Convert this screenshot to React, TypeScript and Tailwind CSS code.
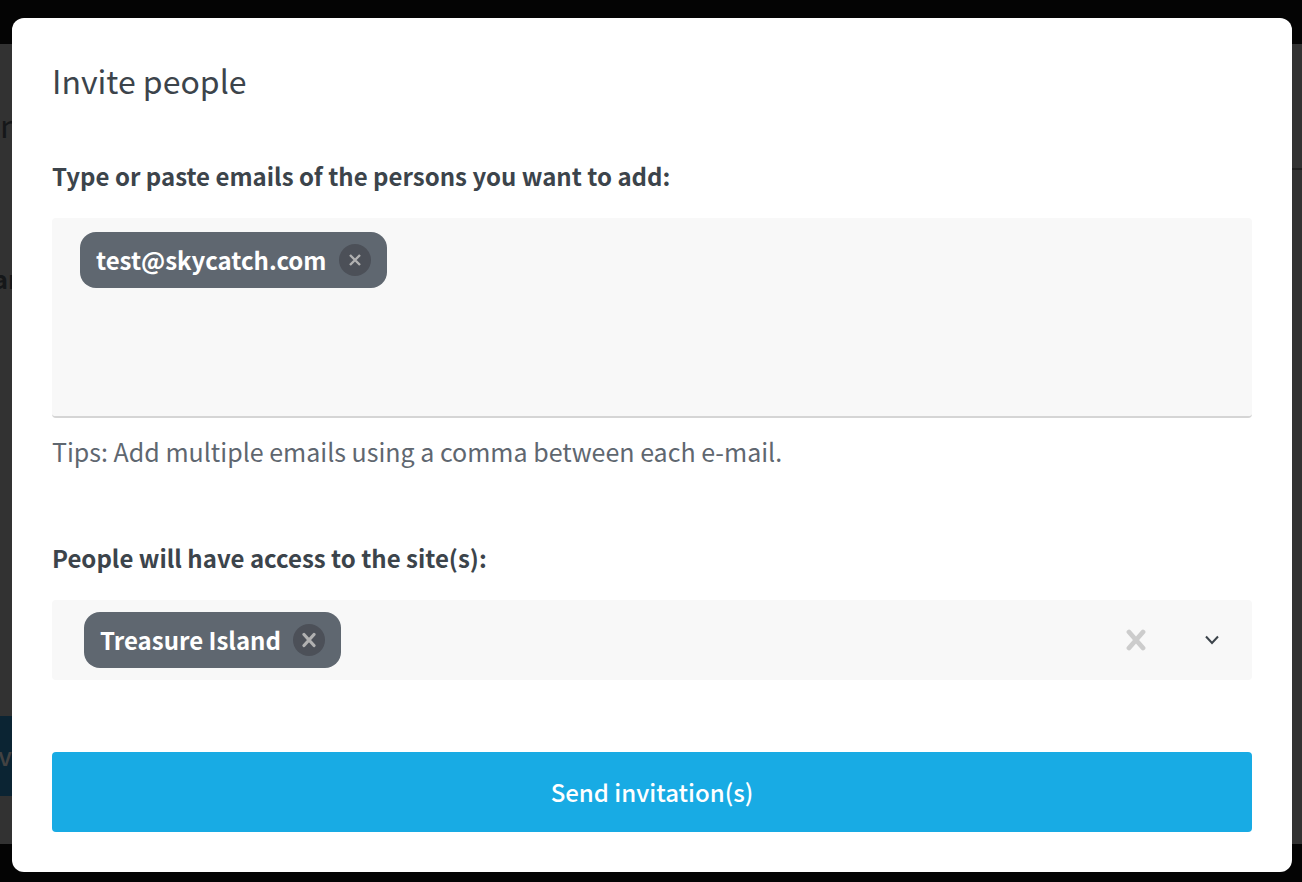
import { useState } from "react";
import type { ReactNode } from "react";

const SITES = ["Treasure Island"];

interface ChipProps {
  label: string;
  onRemove: () => void;
  icon: ReactNode;
}

function Chip({ label, onRemove, icon }: ChipProps) {
  return (
    <span className="flex h-14 items-center gap-3 rounded-2xl bg-[#5f6770] px-4 text-2xl font-bold text-white">
      {label}
      <button
        type="button"
        aria-label={`Remove ${label}`}
        onClick={onRemove}
        className="flex size-8 items-center justify-center rounded-full bg-[#4c5058] text-[#b1b1b1]"
      >
        {icon}
      </button>
    </span>
  );
}

// Page that stays visible around the dialog, already dimmed
function DimmedPage() {
  return (
    <div aria-hidden="true" className="flex min-h-screen flex-col bg-[#040404]">
      <div className="h-11" />
      <div className="flex flex-1 flex-col overflow-hidden bg-[#323232] text-[#151719]">
        <div className="flex h-[124px] items-center pt-9 text-[32px] leading-10">n</div>
        <div className="ml-6 h-[2px] bg-[#202020]" />
        <div className="flex w-3 flex-1 justify-center pt-[88px] text-[25px] leading-10 font-bold">ar</div>
        <div className="flex h-20 w-3 items-center justify-end bg-[#0b2433] text-[25px] font-medium text-[#434242]">
          v
        </div>
        <div className="h-12" />
      </div>
      <div className="h-[38px]" />
    </div>
  );
}

export default function App() {
  const [emails, setEmails] = useState(["test@skycatch.com"]);
  const [draft, setDraft] = useState("");
  const [sites, setSites] = useState(SITES);

  const handleDraft = (value: string) => {
    if (!value.includes(",")) {
      setDraft(value);
      return;
    }
    const parts = value.split(",").map((part) => part.trim());
    setDraft(parts.pop() ?? "");
    setEmails([...emails, ...parts.filter(Boolean)]);
  };

  return (
    <div className="relative font-['Noto_Sans_CJK_SC',sans-serif] text-[#3c444b]">
      <DimmedPage />

      <div className="absolute inset-0 pt-[18px] pr-[10px] pb-[10px] pl-3">
        <form
          role="dialog"
          aria-labelledby="invite-title"
          onSubmit={(e) => e.preventDefault()}
          className="flex flex-col rounded-xl bg-white p-10"
        >
          <h2 id="invite-title" className="text-[32px] leading-11">
            Invite people
          </h2>

          <label htmlFor="emails" className="mt-[54px] text-2xl leading-10 font-bold">
            Type or paste emails of the persons you want to add:
          </label>
          <div className="mt-[22px] flex h-[200px] flex-wrap items-start gap-3 rounded border-b-2 border-[#d5d5d5] bg-[#f8f8f8] px-7 pt-[14px]">
            {emails.map((email) => (
              <Chip
                key={email}
                label={email}
                onRemove={() => setEmails(emails.filter((item) => item !== email))}
                icon={
                  <svg viewBox="0 0 12 12" className="size-3" stroke="currentColor" strokeWidth="2.4">
                    <path d="M1 1l10 10M11 1L1 11" />
                  </svg>
                }
              />
            ))}
            <textarea
              id="emails"
              value={draft}
              onChange={(e) => handleDraft(e.target.value)}
              className="h-14 flex-1 resize-none bg-transparent py-2 text-[25px] leading-10 outline-none"
            />
          </div>
          <p className="mt-[13px] text-[25px] leading-10 text-[#5f6770]">
            Tips: Add multiple emails using a comma between each e-mail.
          </p>

          <label htmlFor="sites" className="mt-[67px] text-2xl leading-10 font-bold">
            People will have access to the site(s):
          </label>
          <div className="mt-[22px] flex h-20 items-center rounded bg-[#f8f8f8] pl-8">
            <div className="flex flex-1 gap-3">
              {sites.map((site) => (
                <Chip
                  key={site}
                  label={site}
                  onRemove={() => setSites(sites.filter((item) => item !== site))}
                  icon={
                    <svg viewBox="0 0 14 16" className="h-4 w-[14px]" stroke="currentColor" strokeWidth="3.2" strokeLinecap="round">
                      <path d="M2 2.5l10 11M12 2.5L2 13.5" />
                    </svg>
                  }
                />
              ))}
            </div>
            <button
              type="button"
              aria-label="Clear sites"
              onClick={() => setSites([])}
              className="flex size-[72px] items-center justify-center text-[#cccccc]"
            >
              <svg viewBox="0 0 20 22" className="h-[22px] w-5" stroke="currentColor" strokeWidth="4.8" strokeLinecap="round">
                <path d="M3 3l14 16M17 3L3 19" />
              </svg>
            </button>
            <div className="relative flex h-full w-20 items-center justify-center">
              <select
                id="sites"
                value=""
                onChange={(e) => setSites([...new Set([...sites, e.target.value])])}
                className="absolute inset-0 cursor-pointer appearance-none bg-transparent outline-none"
              >
                <option value="" />
                {SITES.map((site) => (
                  <option key={site}>{site}</option>
                ))}
              </select>
              <svg
                viewBox="0 0 14 10"
                className="pointer-events-none h-[10px] w-[14px]"
                fill="none"
                stroke="currentColor"
                strokeWidth="2"
              >
                <path d="M1 1.5l6 6.5 6-6.5" />
              </svg>
            </div>
          </div>

          <button
            type="submit"
            className="mt-[72px] h-20 rounded bg-[#18abe4] text-2xl font-medium text-white"
          >
            Send invitation(s)
          </button>
        </form>
      </div>
    </div>
  );
}
